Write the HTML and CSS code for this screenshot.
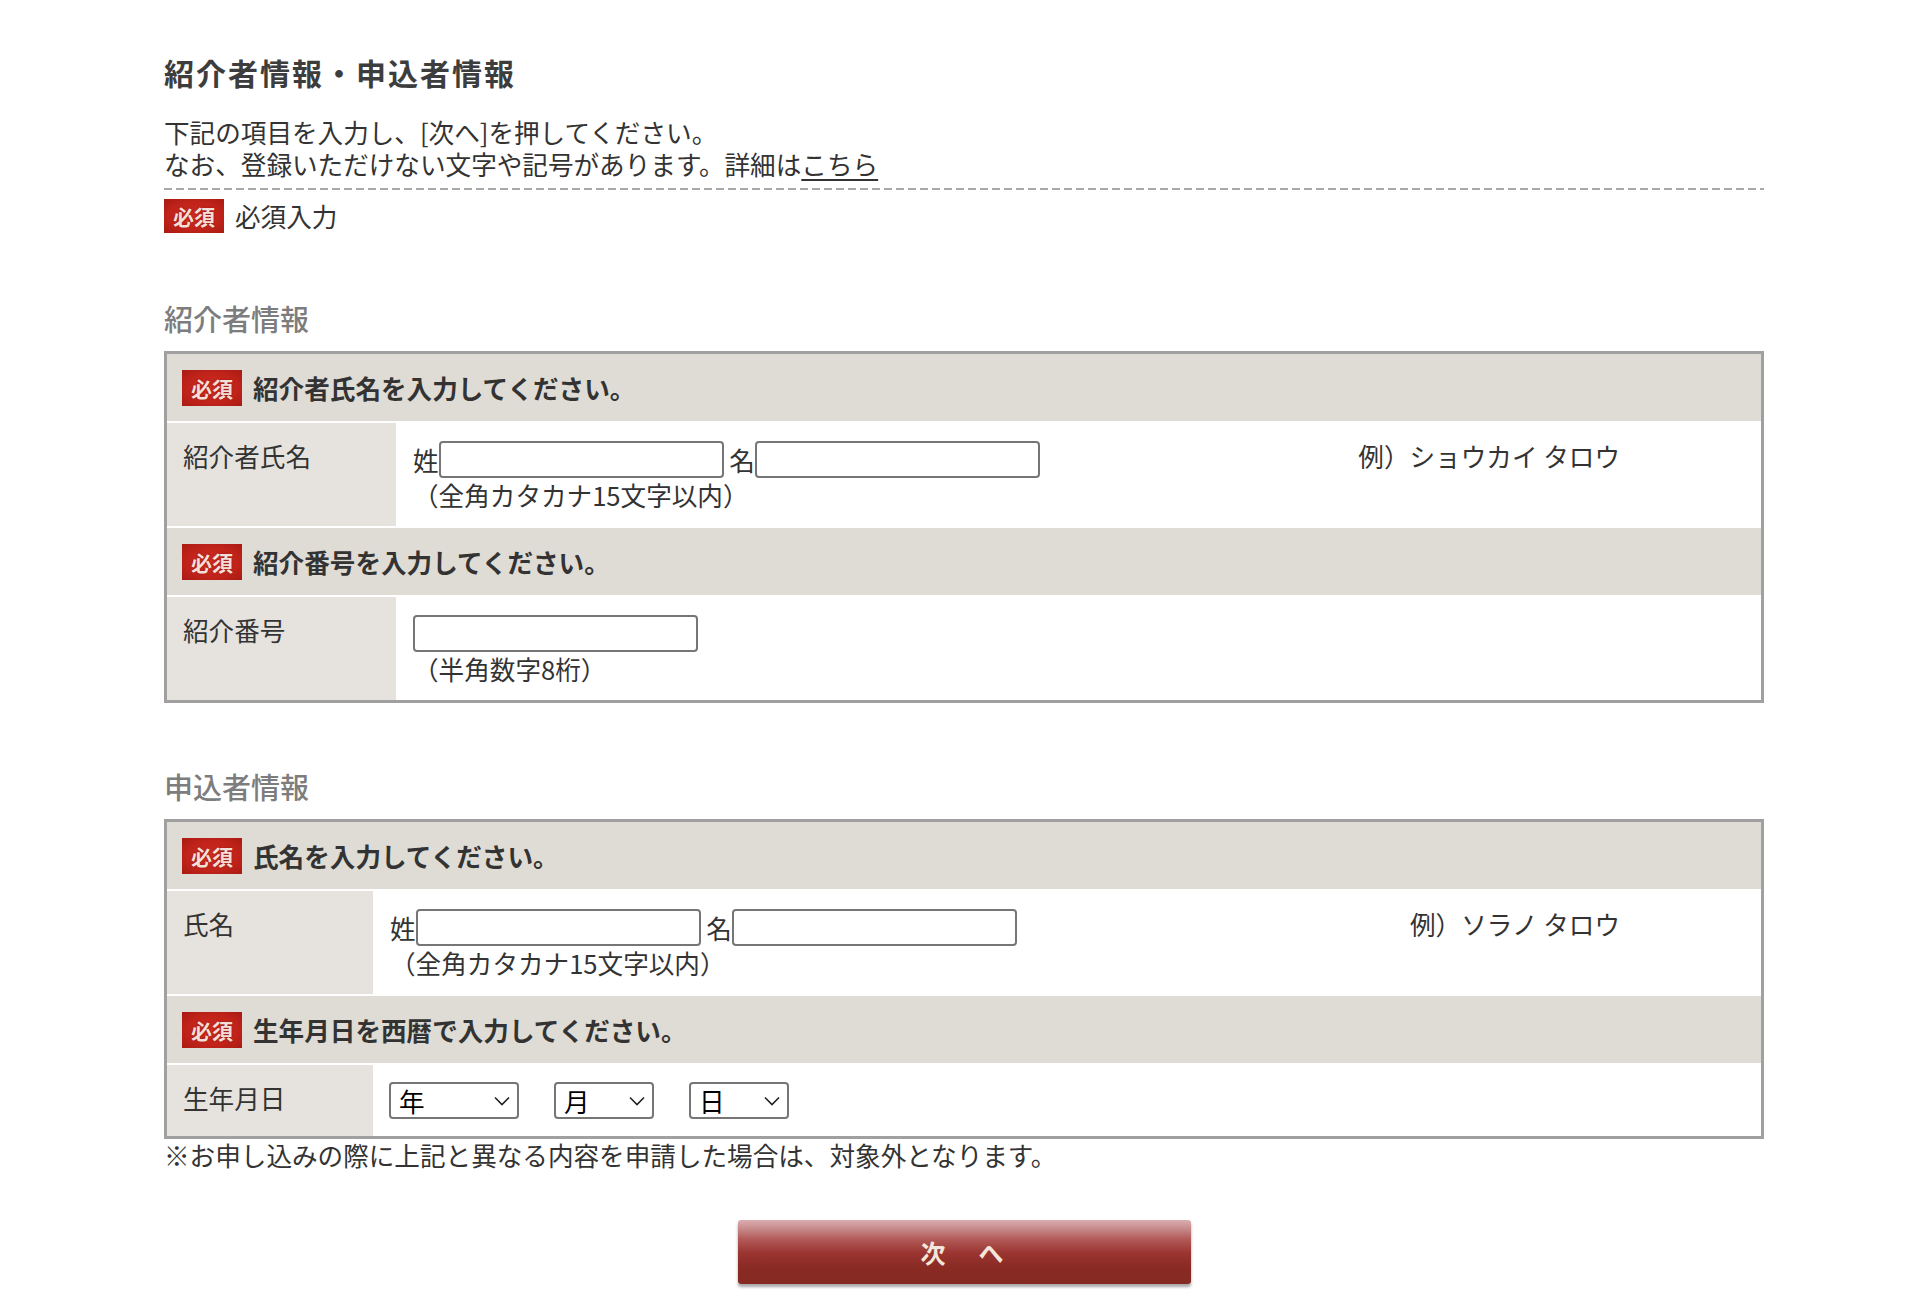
FILE: index.html
```html
<!DOCTYPE html>
<html lang="ja">
<head>
    <meta charset="utf-8">
    <title>紹介者情報・申込者情報</title>
    <meta name="viewport" content="width=device-width, initial-scale=1.0">
    <link rel="stylesheet" href="styles.css">
</head>
<body>
    <div class="page">
        <h1 class="page-title">紹介者情報・申込者情報</h1>
        <p class="lead"><span class="line">下記の項目を入力し、[次へ]を押してください。</span><span class="line">なお、登録いただけない文字や記号があります。詳細は<a href="#">こちら</a></span></p>
        <div class="divider"></div>
        <div class="legend"><span class="req">必須</span>必須入力</div>

        <!-- 紹介者情報 -->
        <h2 class="sec-title">紹介者情報</h2>
        <div class="form-table">
            <div class="q-head"><span class="req">必須</span>紹介者氏名を入力してください。</div>
            <div class="q-row">
                <div class="q-label wide">紹介者氏名</div>
                <div class="q-field">
                    <div class="name-line">姓<input type="text" class="txt"> 名<input type="text" class="txt"></div>
                    <div class="hint">（全角カタカナ15文字以内）</div>
                </div>
                <div class="q-example">例）ショウカイ タロウ</div>
            </div>
            <div class="q-head"><span class="req">必須</span>紹介番号を入力してください。</div>
            <div class="q-row">
                <div class="q-label wide">紹介番号</div>
                <div class="q-field">
                    <div class="name-line"><input type="text" class="txt"></div>
                    <div class="hint">（半角数字8桁）</div>
                </div>
            </div>
        </div>

        <!-- 申込者情報 -->
        <h2 class="sec-title second">申込者情報</h2>
        <div class="form-table">
            <div class="q-head"><span class="req">必須</span>氏名を入力してください。</div>
            <div class="q-row">
                <div class="q-label">氏名</div>
                <div class="q-field">
                    <div class="name-line">姓<input type="text" class="txt"> 名<input type="text" class="txt"></div>
                    <div class="hint">（全角カタカナ15文字以内）</div>
                </div>
                <div class="q-example">例）ソラノ タロウ</div>
            </div>
            <div class="q-head"><span class="req">必須</span>生年月日を西暦で入力してください。</div>
            <div class="q-row">
                <div class="q-label">生年月日</div>
                <div class="q-field dates">
                    <span class="sel-wrap sel-year">
                        <select class="sel"><option>年</option></select>
                        <svg class="chev" viewBox="0 0 16 10" width="16" height="10"><path d="M1 1.5 L8 8.5 L15 1.5" fill="none" stroke="#222" stroke-width="1.6"/></svg>
                    </span>
                    <span class="sel-wrap sel-md">
                        <select class="sel"><option>月</option></select>
                        <svg class="chev" viewBox="0 0 16 10" width="16" height="10"><path d="M1 1.5 L8 8.5 L15 1.5" fill="none" stroke="#222" stroke-width="1.6"/></svg>
                    </span>
                    <span class="sel-wrap sel-md">
                        <select class="sel"><option>日</option></select>
                        <svg class="chev" viewBox="0 0 16 10" width="16" height="10"><path d="M1 1.5 L8 8.5 L15 1.5" fill="none" stroke="#222" stroke-width="1.6"/></svg>
                    </span>
                </div>
            </div>
        </div>
        <p class="note">※お申し込みの際に上記と異なる内容を申請した場合は、対象外となります。</p>

        <div class="actions">
            <button type="button" class="next-btn">次　へ</button>
        </div>
    </div>
</body>
</html>
```

FILE: styles.css
```css
body {
    margin: 0;
    font-family: "Noto Sans CJK JP", "Noto Sans", sans-serif;
    font-size: 25.6px;
    color: #333;
    background: #fff;
}

.page {
    width: 1600px;
    margin-left: 164px;
    padding-top: 54px;
    padding-bottom: 20px;
}

.page-title {
    margin: 0;
    font-size: 30px;
    line-height: 36px;
    font-weight: bold;
    color: #3d3d3d;
    letter-spacing: 2px;
}

.lead {
    margin: 26px 0 0;
}

.lead .line {
    display: block;
    height: 32px;
    line-height: 32px;
}

.lead a {
    color: #333;
    text-decoration: underline;
    text-underline-offset: 4px;
}

.divider {
    margin-top: 8px;
    height: 2px;
    background-image: linear-gradient(to right, #a8a8a8 0 8px, transparent 8px 12px);
    background-size: 12px 2px;
    background-repeat: repeat-x;
}

.legend {
    margin-top: 9px;
    display: flex;
    align-items: center;
    line-height: 34px;
}

.legend .req {
    height: 34px;
    margin-right: 11px;
}

.req {
    display: inline-flex;
    align-items: center;
    justify-content: center;
    width: 60px;
    height: 36px;
    flex: 0 0 auto;
    background: radial-gradient(ellipse at 50% 50%, #cf2c20 0%, #c0231a 60%, #a81a12 100%);
    color: #f6ded6;
    font-size: 21px;
    font-weight: bold;
    text-shadow: 0 0 2px rgba(120, 20, 10, 0.8);
}

.sec-title {
    margin: 67px 0 0;
    font-size: 29px;
    line-height: 36px;
    font-weight: 500;
    color: #7d7d7d;
}

.sec-title.second {
    margin-top: 65px;
}

.form-table {
    margin-top: 15px;
    border: 3px solid #a0a0a0;
    background: #fff;
    display: flex;
    flex-direction: column;
    gap: 2px;
}

.q-head {
    display: flex;
    align-items: center;
    height: 67px;
    padding: 0 15px;
    background: #dfdcd5;
    font-weight: bold;
    color: #333;
}

.q-head .req {
    margin-right: 11px;
}

.q-row {
    display: flex;
    background: #fff;
}

.q-label {
    box-sizing: border-box;
    width: 206px;
    flex: 0 0 auto;
    padding: 14px 0 0 16px;
    line-height: 37px;
    background: #e6e3de;
}

.q-label.wide {
    width: 229px;
}

.q-field {
    padding: 18px 17px 15px;
}

.name-line {
    display: flex;
    align-items: center;
    line-height: 37px;
    white-space: pre;
}

.txt {
    width: 285px;
    height: 37px;
    box-sizing: border-box;
    border: 2px solid #767676;
    border-radius: 4px;
    background: #fff;
    font-size: 20px;
    padding: 0 6px;
    margin: 0;
}

.hint {
    line-height: 33px;
}

.q-example {
    margin-left: auto;
    padding: 14px 141px 0 0;
    line-height: 37px;
}

.dates {
    display: flex;
    gap: 35px;
    padding: 17px 17px 17px 16px;
}

.sel-wrap {
    position: relative;
    display: block;
    height: 37px;
}

.sel-year {
    width: 130px;
}

.sel-md {
    width: 100px;
}

.sel {
    appearance: none;
    -webkit-appearance: none;
    display: block;
    width: 100%;
    height: 37px;
    box-sizing: border-box;
    border: 2px solid #767676;
    border-radius: 4px;
    background: #fff;
    color: #000;
    font-family: "Noto Sans CJK JP", sans-serif;
    font-size: 25.6px;
    line-height: 33px;
    padding: 0 0 0 8px;
    margin: 0;
}

.chev {
    position: absolute;
    right: 9px;
    top: 14px;
    pointer-events: none;
}

.note {
    margin: 0;
    line-height: 32px;
}

.actions {
    display: flex;
    justify-content: center;
    margin-top: 49px;
}

.next-btn {
    width: 453px;
    height: 64px;
    border: none;
    border-radius: 3px;
    background: linear-gradient(to bottom, #dcadb0 0%, #c98f90 12%, #b25a58 30%, #9a3430 52%, #892a23 75%, #852a22 100%);
    box-shadow: 0 3px 3px rgba(60, 60, 60, 0.45);
    color: #f3e6db;
    font-family: "Noto Sans CJK JP", sans-serif;
    font-size: 25px;
    font-weight: bold;
    letter-spacing: 4px;
    cursor: pointer;
}
```
